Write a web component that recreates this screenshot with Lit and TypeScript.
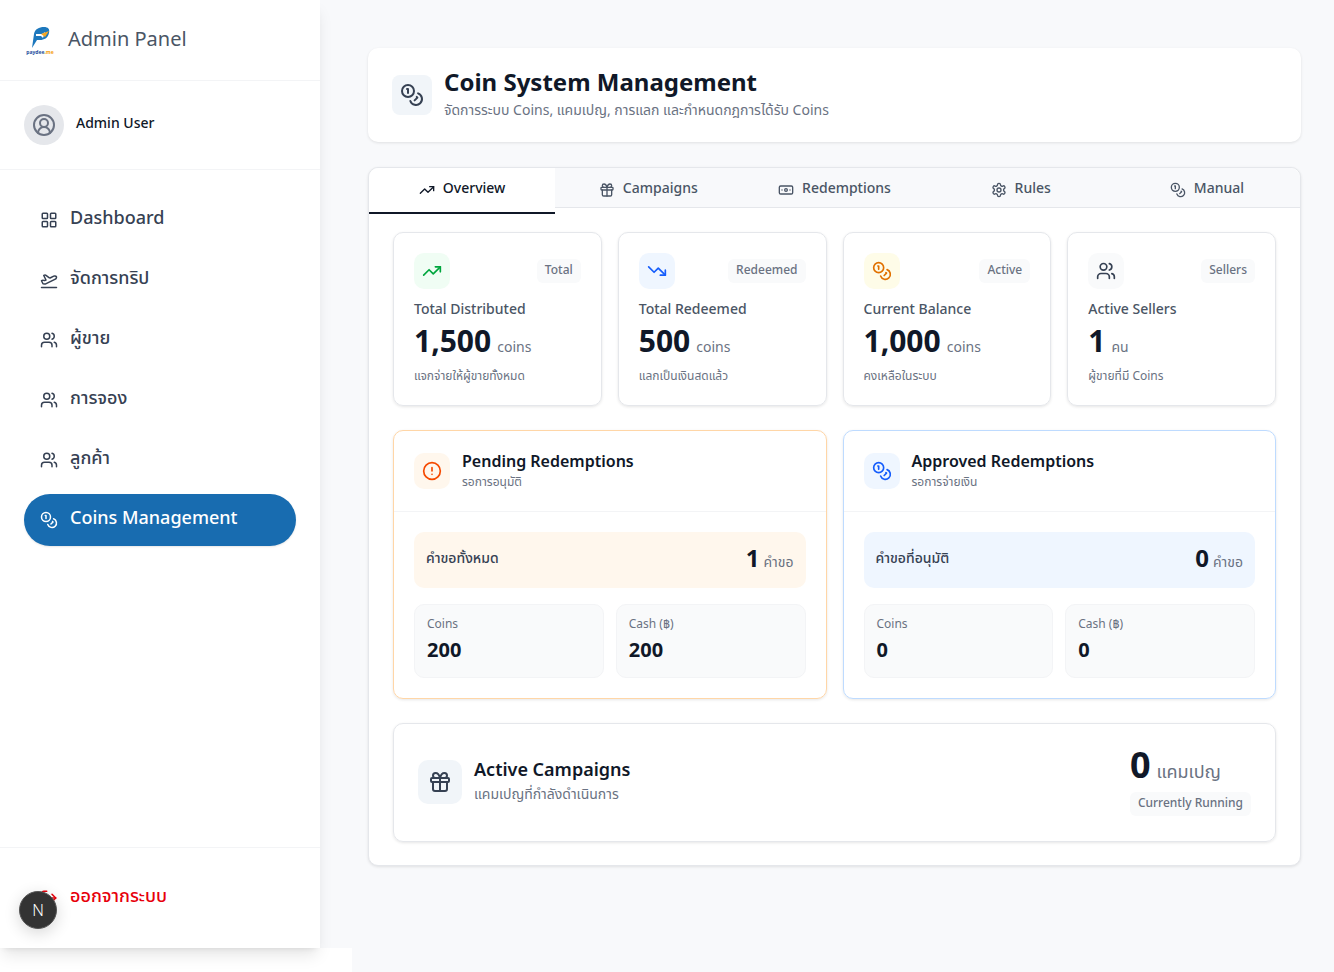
import { LitElement, html, css, svg } from 'lit'
import { customElement } from 'lit/decorators.js'

const icons = {
  coins: svg`<circle cx="8" cy="8" r="6"/><path d="M18.09 10.37A6 6 0 1 1 10.34 18"/><path d="M7 6h1v4"/><path d="m16.71 13.88.7.71-2.82 2.82"/>`,
  up: svg`<path d="M22 7 13.5 15.5 8.5 10.5 2 17"/><path d="M16 7h6v6"/>`,
  down: svg`<path d="M22 17 13.5 8.5 8.5 13.5 2 7"/><path d="M16 17h6v-6"/>`,
  gift: svg`<rect x="3" y="8" width="18" height="4" rx="1"/><path d="M12 8v13"/><path d="M19 12v7a2 2 0 0 1-2 2H7a2 2 0 0 1-2-2v-7"/><path d="M7.5 8a2.5 2.5 0 0 1 0-5A4.8 8 0 0 1 12 8a4.8 8 0 0 1 4.5-5 2.5 2.5 0 0 1 0 5"/>`,
  note: svg`<rect x="2" y="6" width="20" height="12" rx="2"/><circle cx="12" cy="12" r="2"/><path d="M6 12h.01M18 12h.01"/>`,
  gear: svg`<path d="M12.22 2h-.44a2 2 0 0 0-2 2v.18a2 2 0 0 1-1 1.73l-.43.25a2 2 0 0 1-2 0l-.15-.08a2 2 0 0 0-2.73.73l-.22.38a2 2 0 0 0 .73 2.73l.15.1a2 2 0 0 1 1 1.72v.51a2 2 0 0 1-1 1.74l-.15.09a2 2 0 0 0-.73 2.73l.22.38a2 2 0 0 0 2.73.73l.15-.08a2 2 0 0 1 2 0l.43.25a2 2 0 0 1 1 1.73V20a2 2 0 0 0 2 2h.44a2 2 0 0 0 2-2v-.18a2 2 0 0 1 1-1.73l.43-.25a2 2 0 0 1 2 0l.15.08a2 2 0 0 0 2.73-.73l.22-.39a2 2 0 0 0-.73-2.73l-.15-.08a2 2 0 0 1-1-1.74v-.5a2 2 0 0 1 1-1.74l.15-.09a2 2 0 0 0 .73-2.73l-.22-.38a2 2 0 0 0-2.73-.73l-.15.08a2 2 0 0 1-2 0l-.43-.25a2 2 0 0 1-1-1.73V4a2 2 0 0 0-2-2z"/><circle cx="12" cy="12" r="3"/>`,
  users: svg`<path d="M16 21v-2a4 4 0 0 0-4-4H6a4 4 0 0 0-4 4v2"/><circle cx="9" cy="7" r="4"/><path d="M22 21v-2a4 4 0 0 0-3-3.87"/><path d="M16 3.13a4 4 0 0 1 0 7.75"/>`,
  grid: svg`<rect x="3" y="3" width="7" height="7" rx="1"/><rect x="14" y="3" width="7" height="7" rx="1"/><rect x="14" y="14" width="7" height="7" rx="1"/><rect x="3" y="14" width="7" height="7" rx="1"/>`,
  plane: svg`<path d="M2 22h20"/><path d="M6.36 17.4 4 17l-2-4 1.1-.55a2 2 0 0 1 1.8 0l.17.1a2 2 0 0 0 1.8 0L8 12 5 6l.9-.45a2 2 0 0 1 2.09.2l4.02 3a2 2 0 0 0 2.1.2l4.19-2.06a2.41 2.41 0 0 1 1.73-.17L21 7a1.4 1.4 0 0 1 .87 1.99l-.38.76c-.23.46-.6.84-1.07 1.08L7.58 17.2a2 2 0 0 1-1.22.18Z"/>`,
  user: svg`<path d="M18 20a6 6 0 0 0-12 0"/><circle cx="12" cy="10" r="4"/><circle cx="12" cy="12" r="10"/>`,
  alert: svg`<circle cx="12" cy="12" r="10"/><line x1="12" y1="8" x2="12" y2="12"/><line x1="12" y1="16" x2="12.01" y2="16"/>`,
  logout: svg`<path d="M9 21H5a2 2 0 0 1-2-2V5a2 2 0 0 1 2-2h4"/><path d="m16 17 5-5-5-5"/><path d="M21 12H9"/>`,
}

type IconName = keyof typeof icons

const icon = (name: IconName) => html`<svg class="ico" viewBox="0 0 24 24" fill="none" stroke="currentColor" stroke-width="2" stroke-linecap="round" stroke-linejoin="round">${icons[name]}</svg>`

const navItems: { label: string; icon: IconName; active?: boolean }[] = [
  { label: 'Dashboard', icon: 'grid' },
  { label: 'จัดการทริป', icon: 'plane' },
  { label: 'ผู้ขาย', icon: 'users' },
  { label: 'การจอง', icon: 'users' },
  { label: 'ลูกค้า', icon: 'users' },
  { label: 'Coins Management', icon: 'coins', active: true },
]

const tabs: { label: string; icon: IconName; active?: boolean }[] = [
  { label: 'Overview', icon: 'up', active: true },
  { label: 'Campaigns', icon: 'gift' },
  { label: 'Redemptions', icon: 'note' },
  { label: 'Rules', icon: 'gear' },
  { label: 'Manual', icon: 'coins' },
]

const stats: { tone: string; icon: IconName; badge: string; label: string; value: string; unit: string; note: string }[] = [
  { tone: 'green', icon: 'up', badge: 'Total', label: 'Total Distributed', value: '1,500', unit: 'coins', note: 'แจกจ่ายให้ผู้ขายทั้งหมด' },
  { tone: 'blue', icon: 'down', badge: 'Redeemed', label: 'Total Redeemed', value: '500', unit: 'coins', note: 'แลกเป็นเงินสดแล้ว' },
  { tone: 'amber', icon: 'coins', badge: 'Active', label: 'Current Balance', value: '1,000', unit: 'coins', note: 'คงเหลือในระบบ' },
  { tone: 'slate', icon: 'users', badge: 'Sellers', label: 'Active Sellers', value: '1', unit: 'คน', note: 'ผู้ขายที่มี Coins' },
]

const panels: { tone: string; icon: IconName; title: string; sub: string; rowLabel: string; count: string; coins: string; cash: string }[] = [
  { tone: 'orange', icon: 'alert', title: 'Pending Redemptions', sub: 'รอการอนุมัติ', rowLabel: 'คำขอทั้งหมด', count: '1', coins: '200', cash: '200' },
  { tone: 'blue', icon: 'coins', title: 'Approved Redemptions', sub: 'รอการจ่ายเงิน', rowLabel: 'คำขอที่อนุมัติ', count: '0', coins: '0', cash: '0' },
]

@customElement('app-root')
export class AppRoot extends LitElement {
  static styles = css`
    :host {
      display: block;
      position: relative;
      min-height: 972px;
      background: #f8f9fb;
      font-family: "Noto Sans", "Noto Sans Thai", "Noto Sans Thai UI", sans-serif;
      color: #101828;
    }
    * { box-sizing: border-box; }
    .ico { display: block; width: 100%; height: 100%; }
    .layout { display: flex; align-items: flex-start; }

    .spill { position: absolute; left: 0; top: 948px; width: 352px; height: 24px; background: #fff; }

    .sidebar {
      position: relative;
      flex: none;
      width: 320px;
      height: 948px;
      background: #fff;
      display: flex;
      flex-direction: column;
      box-shadow: 0 10px 15px -3px rgba(0,0,0,.1), 0 4px 6px -4px rgba(0,0,0,.1);
    }
    .brand { height: 81px; display: flex; align-items: center; gap: 12px; padding: 0 24px; border-bottom: 1px solid #f3f4f6; }
    .logo { width: 32px; height: 32px; display: flex; flex-direction: column; align-items: center; margin-top: 1px; }
    .logo svg { width: 24px; height: 24px; display: block; }
    .logo span { font-size: 5px; line-height: 6px; font-weight: 700; color: #1d4e9e; white-space: nowrap; }
    .logo b { color: #f59e0b; font-weight: 700; }
    .brand-name { font-size: 20px; color: #4a5565; margin-bottom: 4px; }
    .account { height: 89px; display: flex; align-items: center; gap: 12px; padding: 0 24px; border-bottom: 1px solid #f3f4f6; }
    .avatar { width: 40px; height: 40px; border-radius: 50%; background: #e5e7eb; color: #6a7282; display: flex; align-items: center; justify-content: center; }
    .avatar div { width: 24px; height: 24px; }
    .account-name { font-size: 14px; font-weight: 500; color: #101828; margin-bottom: 6px; }
    nav { flex: 1; padding: 24px 24px; display: flex; flex-direction: column; gap: 8px; }
    .nav-item { height: 52px; border-radius: 26px; padding: 0 16px 6px; display: flex; align-items: center; gap: 12px; font-size: 18px; line-height: 24px; font-weight: 500; color: #364153; }
    .nav-item div { width: 18px; height: 18px; flex: none; margin-top: 6px; }
    .nav-item.active { background: #186cb0; color: #fff; box-shadow: 0 1px 2px rgba(0,0,0,.1); }
    .foot { height: 101px; border-top: 1px solid #f3f4f6; padding: 24px 24px; }
    .logout { color: #e7000b; }

    .dev { position: absolute; left: 19px; top: 891px; width: 38px; height: 38px; border-radius: 50%; background: #333; border: 1px solid #555; color: #fff; font-size: 16px; font-weight: 300; display: flex; align-items: center; justify-content: center; box-shadow: 0 4px 16px rgba(0,0,0,.16); }

    main { flex: 1; padding: 48px 33px 0 48px; display: flex; flex-direction: column; gap: 24px; min-width: 0; }
    .title-card { height: 94px; margin-bottom: 1px; background: #fff; border-radius: 10px; box-shadow: 0 1px 3px rgba(0,0,0,.1); padding: 0 24px; display: flex; align-items: center; gap: 12px; }
    .title-ico { width: 40px; height: 40px; border-radius: 8px; background: #f1f5f9; color: #364153; display: flex; align-items: center; justify-content: center; }
    .title-ico div { width: 24px; height: 24px; }
    .title-text { margin-bottom: 4px; }
    h1 { margin: 0; font-size: 24px; line-height: 32px; font-weight: 700; color: #101828; }
    .title-text p { margin: 1px 0 0; font-size: 14px; line-height: 22px; color: #6a7282; }

    .board { background: #fff; border: 1px solid #e5e7eb; border-radius: 10px; box-shadow: 0 1px 3px rgba(0,0,0,.1); height: 699px; }
    .tabbar { height: 40px; display: grid; grid-template-columns: repeat(5, 1fr); background: #f8f9fb; border-bottom: 1px solid #e5e7eb; border-radius: 10px 10px 0 0; }
    .tab { height: 40px; display: flex; align-items: center; justify-content: center; gap: 8px; font-size: 14px; font-weight: 500; color: #4a5565; padding-bottom: 2px; }
    .tab div { width: 16px; height: 16px; margin-top: 6px; }
    .tab.active { height: 46px; background: #fff; color: #101828; border-bottom: 2px solid #101828; padding-bottom: 6px; border-radius: 10px 0 0 0; position: relative; }
    .content { padding: 24px; display: flex; flex-direction: column; gap: 24px; }

    .stats { display: grid; grid-template-columns: repeat(4, 1fr); gap: 16px; }
    .stat { height: 174px; border: 1px solid #e5e7eb; border-radius: 10px; box-shadow: 0 1px 3px rgba(0,0,0,.1); padding: 20px; }
    .stat-top { display: flex; justify-content: space-between; align-items: center; }
    .tile { width: 36px; height: 36px; border-radius: 10px; display: flex; align-items: center; justify-content: center; flex: none; }
    .tile div { width: 20px; height: 20px; }
    .green { background: #f0fdf4; color: #00a63e; }
    .blue { background: #eff6ff; color: #155dfc; }
    .amber { background: #fefce8; color: #e17100; }
    .slate { background: #f9fafb; color: #364153; }
    .orange { background: #fff7ed; color: #f54900; }
    .badge { height: 24px; padding: 0 8px; border-radius: 6px; background: #f9fafb; font-size: 12px; line-height: 22px; color: #6a7282; font-weight: 500; }
    .stat-label { margin-top: 10px; font-size: 14px; line-height: 20px; color: #4a5565; font-weight: 500; }
    .stat-value { margin-top: 2px; display: flex; align-items: baseline; gap: 6px; line-height: 40px; }
    .stat-value strong { font-size: 30px; font-weight: 700; color: #101828; }
    .stat-value span { font-size: 14px; color: #6a7282; }
    .stat-note { margin-top: 1px; font-size: 12px; line-height: 16px; color: #6a7282; }

    .panels { display: grid; grid-template-columns: repeat(2, 1fr); gap: 16px; }
    .panel { height: 269px; border: 1px solid; border-radius: 10px; box-shadow: 0 1px 3px rgba(0,0,0,.1); }
    .panel.orange-edge { border-color: #ffd6a7; }
    .panel.blue-edge { border-color: #bedbff; }
    .panel-head { height: 81px; padding: 0 20px; display: flex; align-items: center; gap: 12px; border-bottom: 1px solid #f3f4f6; }
    .panel-title { font-size: 16px; line-height: 24px; font-weight: 600; color: #101828; margin-top: -3px; }
    .panel-sub { font-size: 12px; line-height: 16px; color: #6a7282; margin-top: 1px; }
    .panel-body { padding: 20px; display: flex; flex-direction: column; gap: 16px; }
    .total { height: 56px; border-radius: 10px; padding: 0 12px 4px; display: flex; align-items: center; justify-content: space-between; font-size: 14px; font-weight: 500; color: #364153; }
    .total.blue { background: #eff6ff; }
    .total-count { display: flex; align-items: baseline; gap: 4px; margin-bottom: 2px; }
    .total-count strong { font-size: 24px; font-weight: 700; color: #101828; }
    .total-count span { font-size: 14px; font-weight: 400; color: #6a7282; }
    .splits { display: grid; grid-template-columns: repeat(2, 1fr); gap: 12px; }
    .split { height: 74px; background: #f9fafb; border: 1px solid #f3f4f6; border-radius: 10px; padding: 11px 12px; }
    .split label { display: block; font-size: 12px; line-height: 16px; color: #6a7282; }
    .split strong { display: block; margin-top: 4px; font-size: 20px; line-height: 28px; font-weight: 700; color: #101828; }

    .campaigns { height: 119px; border: 1px solid #e5e7eb; border-radius: 10px; box-shadow: 0 1px 3px rgba(0,0,0,.1); padding: 0 24px; display: flex; align-items: center; justify-content: space-between; }
    .camp-left { display: flex; align-items: center; gap: 12px; margin-top: -2px; }
    .camp-ico { width: 44px; height: 44px; border-radius: 10px; background: #f1f5f9; color: #364153; display: flex; align-items: center; justify-content: center; }
    .camp-ico div { width: 24px; height: 24px; }
    .camp-text { margin-top: 5px; }
    .camp-title { font-size: 18px; line-height: 28px; font-weight: 600; color: #101828; margin-top: -10px; }
    .camp-sub { font-size: 14px; line-height: 20px; color: #6a7282; margin-top: 1px; }
    .camp-right { display: flex; flex-direction: column; align-items: flex-start; margin-bottom: 5px; }
    .camp-num { display: flex; align-items: baseline; gap: 6px; line-height: 40px; margin-bottom: 1px; }
    .camp-num strong { font-size: 36px; font-weight: 700; color: #101828; }
    .camp-num span { font-size: 18px; color: #6a7282; }
  `

  protected override render() {
    return html`
      <div class="spill"></div>
      <div class="layout">
        <aside class="sidebar">
          <div class="brand">
            <div class="logo">
              <svg viewBox="0 0 24 24">
                <path d="M4 23 6 9C7 4 11 2 16 2c4 0 6 2 5 6-1 5-5 7-9 7H9Z" fill="#1d78bd"/>
                <path d="M8 9h6l3-2-2 6-2-2H8Z" fill="#fff"/>
                <path d="M13 9l8-3-4 6Z" fill="#f5a623"/>
              </svg>
              <span>paydee<b>.me</b></span>
            </div>
            <div class="brand-name">Admin Panel</div>
          </div>
          <div class="account">
            <div class="avatar"><div>${icon('user')}</div></div>
            <div class="account-name">Admin User</div>
          </div>
          <nav>
            ${navItems.map(n => html`
              <div class="nav-item ${n.active ? 'active' : ''}"><div>${icon(n.icon)}</div>${n.label}</div>
            `)}
          </nav>
          <div class="foot">
            <div class="nav-item logout"><div>${icon('logout')}</div>ออกจากระบบ</div>
          </div>
        </aside>
        <main>
          <section class="title-card">
            <div class="title-ico"><div>${icon('coins')}</div></div>
            <div class="title-text">
              <h1>Coin System Management</h1>
              <p>จัดการระบบ Coins, แคมเปญ, การแลก และกำหนดกฎการได้รับ Coins</p>
            </div>
          </section>
          <section class="board">
            <div class="tabbar">
              ${tabs.map(t => html`
                <div class="tab ${t.active ? 'active' : ''}"><div>${icon(t.icon)}</div>${t.label}</div>
              `)}
            </div>
            <div class="content">
              <div class="stats">
                ${stats.map(s => html`
                  <div class="stat">
                    <div class="stat-top">
                      <div class="tile ${s.tone}"><div>${icon(s.icon)}</div></div>
                      <div class="badge">${s.badge}</div>
                    </div>
                    <div class="stat-label">${s.label}</div>
                    <div class="stat-value"><strong>${s.value}</strong><span>${s.unit}</span></div>
                    <div class="stat-note">${s.note}</div>
                  </div>
                `)}
              </div>
              <div class="panels">
                ${panels.map(p => html`
                  <div class="panel ${p.tone}-edge">
                    <div class="panel-head">
                      <div class="tile ${p.tone}"><div>${icon(p.icon)}</div></div>
                      <div>
                        <div class="panel-title">${p.title}</div>
                        <div class="panel-sub">${p.sub}</div>
                      </div>
                    </div>
                    <div class="panel-body">
                      <div class="total ${p.tone}">
                        <span>${p.rowLabel}</span>
                        <div class="total-count"><strong>${p.count}</strong><span>คำขอ</span></div>
                      </div>
                      <div class="splits">
                        <div class="split"><label>Coins</label><strong>${p.coins}</strong></div>
                        <div class="split"><label>Cash (฿)</label><strong>${p.cash}</strong></div>
                      </div>
                    </div>
                  </div>
                `)}
              </div>
              <div class="campaigns">
                <div class="camp-left">
                  <div class="camp-ico"><div>${icon('gift')}</div></div>
                  <div class="camp-text">
                    <div class="camp-title">Active Campaigns</div>
                    <div class="camp-sub">แคมเปญที่กำลังดำเนินการ</div>
                  </div>
                </div>
                <div class="camp-right">
                  <div class="camp-num"><strong>0</strong><span>แคมเปญ</span></div>
                  <div class="badge">Currently Running</div>
                </div>
              </div>
            </div>
          </section>
        </main>
      </div>
      <div class="dev">N</div>
    `
  }
}

declare global {
  interface HTMLElementTagNameMap {
    'app-root': AppRoot
  }
}
